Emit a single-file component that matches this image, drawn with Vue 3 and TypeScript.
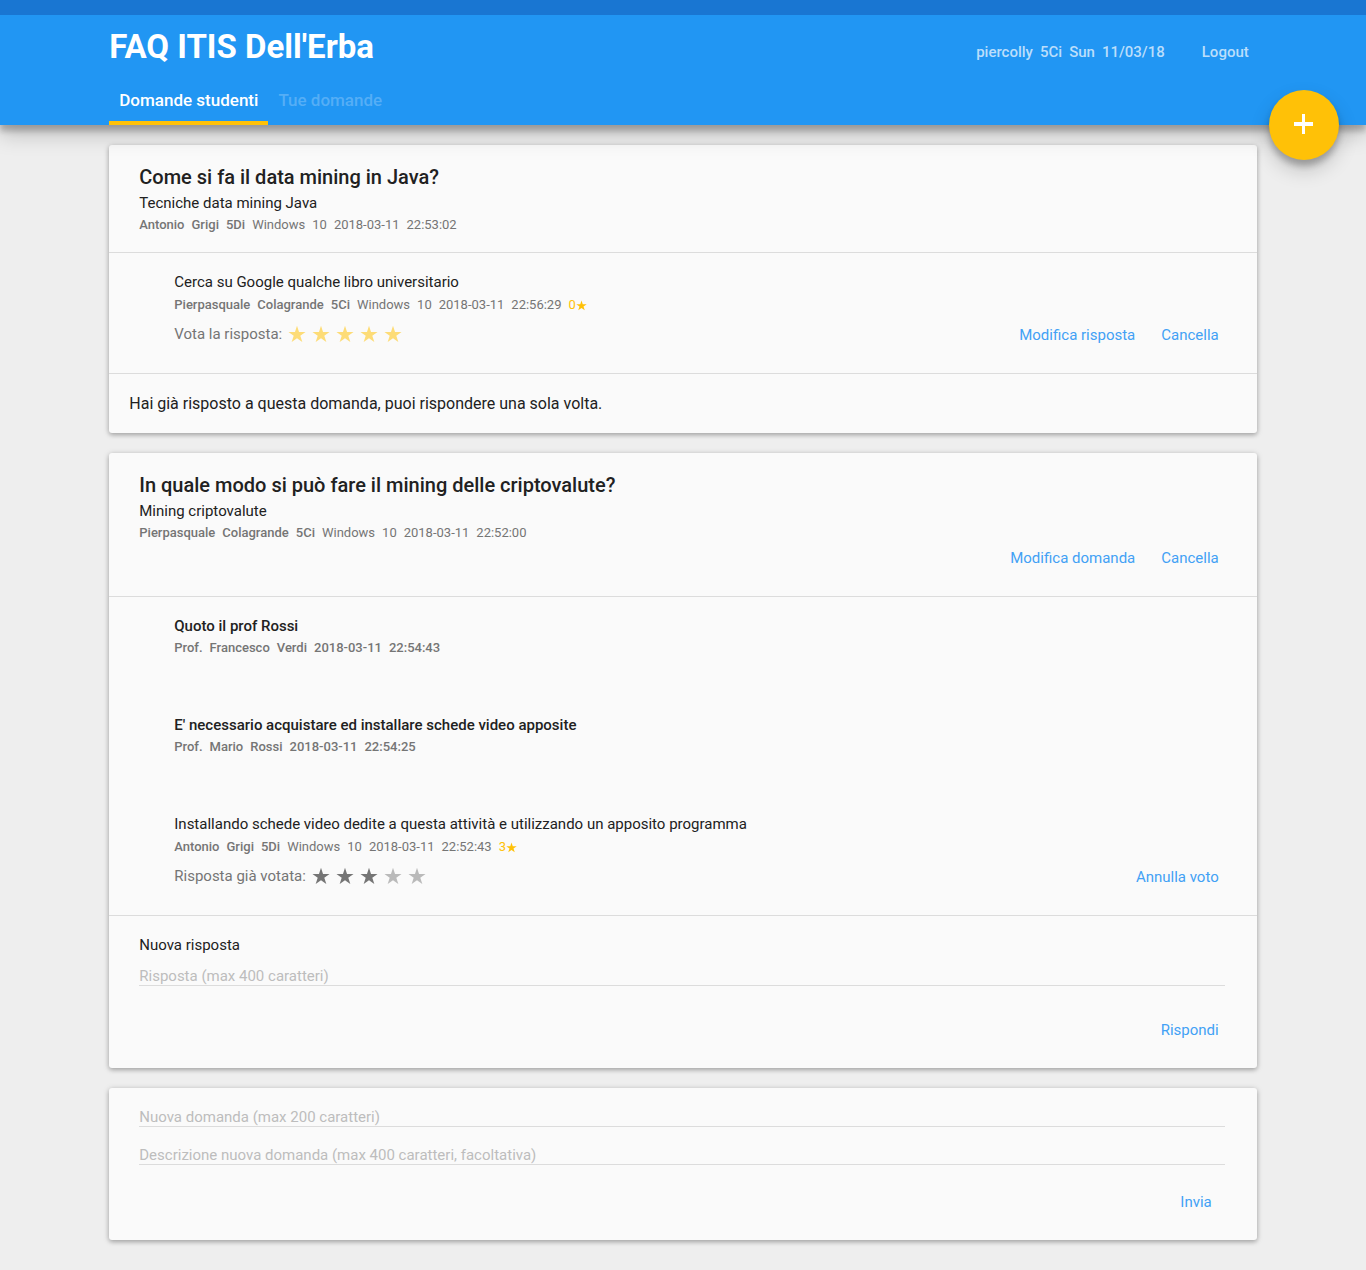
<script setup lang="ts">
import { ref } from 'vue'

interface Answer {
  id: number
  text: string
  author: string[]
  details: string[]
  professor?: boolean
  score?: number
  vote?: 'open' | 'done'
  actions: string[]
}

interface Question {
  id: number
  title: string
  description: string
  author: string[]
  details: string[]
  actions: string[]
  answers: Answer[]
  answered: boolean
}

const STAR = 'M12 1l2.7 8.2h8.7l-7 5.1 2.7 8.3-7.1-5.1-7.1 5.1 2.7-8.3-7-5.1h8.7z'

const session: string[] = ['piercolly', '5Ci', 'Sun', '11/03/18']

const questions: Question[] = [
  {
    id: 1,
    title: 'Come si fa il data mining in Java?',
    description: 'Tecniche data mining Java',
    author: ['Antonio', 'Grigi', '5Di'],
    details: ['Windows', '10', '2018-03-11', '22:53:02'],
    actions: [],
    answered: true,
    answers: [
      {
        id: 1,
        text: 'Cerca su Google qualche libro universitario',
        author: ['Pierpasquale', 'Colagrande', '5Ci'],
        details: ['Windows', '10', '2018-03-11', '22:56:29'],
        score: 0,
        vote: 'open',
        actions: ['Modifica risposta', 'Cancella'],
      },
    ],
  },
  {
    id: 2,
    title: 'In quale modo si può fare il mining delle criptovalute?',
    description: 'Mining criptovalute',
    author: ['Pierpasquale', 'Colagrande', '5Ci'],
    details: ['Windows', '10', '2018-03-11', '22:52:00'],
    actions: ['Modifica domanda', 'Cancella'],
    answered: false,
    answers: [
      {
        id: 2,
        text: 'Quoto il prof Rossi',
        author: ['Prof.', 'Francesco', 'Verdi', '2018-03-11', '22:54:43'],
        details: [],
        professor: true,
        actions: [],
      },
      {
        id: 3,
        text: "E' necessario acquistare ed installare schede video apposite",
        author: ['Prof.', 'Mario', 'Rossi', '2018-03-11', '22:54:25'],
        details: [],
        professor: true,
        actions: [],
      },
      {
        id: 4,
        text: 'Installando schede video dedite a questa attività e utilizzando un apposito programma',
        author: ['Antonio', 'Grigi', '5Di'],
        details: ['Windows', '10', '2018-03-11', '22:52:43'],
        score: 3,
        vote: 'done',
        actions: ['Annulla voto'],
      },
    ],
  },
]

const reply = ref('')
const newQuestion = ref('')
const newDescription = ref('')
</script>

<template>
  <div class="page">
    <header class="header">
      <div class="bar">
        <h1>FAQ ITIS Dell'Erba</h1>
        <div class="session">
          <span v-for="part in session" :key="part">{{ part }}</span>
          <a href="#logout" class="logout">Logout</a>
        </div>
      </div>
      <nav class="tabs">
        <a href="#domande" class="tab active">Domande studenti</a>
        <a href="#tue" class="tab">Tue domande</a>
      </nav>
      <button type="button" class="fab" aria-label="Nuova domanda">
        <svg width="20" height="22" viewBox="0 0 20 22" aria-hidden="true">
          <path d="M8 0h3v8h8v4h-8v8h-3v-8h-8v-4h8z" fill="#fff" />
        </svg>
      </button>
    </header>

    <main class="content">
      <article v-for="q in questions" :key="q.id" class="card">
        <section class="question">
          <h2>{{ q.title }}</h2>
          <p class="description">{{ q.description }}</p>
          <p class="meta">
            <b v-for="w in q.author" :key="w">{{ w }}</b>
            <span v-for="w in q.details" :key="w">{{ w }}</span>
          </p>
          <div v-if="q.actions.length" class="actions">
            <button v-for="a in q.actions" :key="a" type="button" class="flat">{{ a }}</button>
          </div>
        </section>

        <section class="answers">
          <div v-for="a in q.answers" :key="a.id" class="answer" :class="{ professor: a.professor }">
            <p class="text">{{ a.text }}</p>
            <p class="meta">
              <b v-for="w in a.author" :key="w">{{ w }}</b>
              <span v-for="w in a.details" :key="w">{{ w }}</span>
              <span v-if="a.score !== undefined" class="score">
                {{ a.score }}<svg width="11" height="11" viewBox="0 0 24 24" aria-hidden="true"><path :d="STAR" /></svg>
              </span>
            </p>
            <div v-if="a.vote" class="rating">
              <span class="prompt">{{ a.vote === 'open' ? 'Vota la risposta:' : 'Risposta già votata:' }}</span>
              <div v-if="a.vote === 'open'" class="stars open">
                <button v-for="n in 5" :key="n" type="button" class="star" :aria-label="`Vota ${n}`">
                  <svg width="18" height="18" viewBox="0 0 24 24" aria-hidden="true"><path :d="STAR" /></svg>
                </button>
              </div>
              <div v-else class="stars">
                <span v-for="n in 5" :key="n" class="star" :class="{ on: n <= (a.score ?? 0) }">
                  <svg width="18" height="18" viewBox="0 0 24 24" aria-hidden="true"><path :d="STAR" /></svg>
                </span>
              </div>
              <div class="actions">
                <button v-for="t in a.actions" :key="t" type="button" class="flat">{{ t }}</button>
              </div>
            </div>
          </div>
        </section>

        <p v-if="q.answered" class="notice">Hai già risposto a questa domanda, puoi rispondere una sola volta.</p>
        <form v-else class="reply" @submit.prevent>
          <label for="reply">Nuova risposta</label>
          <input id="reply" v-model="reply" type="text" maxlength="400" placeholder="Risposta (max 400 caratteri)" />
          <div class="actions">
            <button type="submit" class="flat">Rispondi</button>
          </div>
        </form>
      </article>

      <form class="card ask" @submit.prevent>
        <input v-model="newQuestion" type="text" maxlength="200" aria-label="Nuova domanda" placeholder="Nuova domanda (max 200 caratteri)" />
        <input v-model="newDescription" type="text" maxlength="400" aria-label="Descrizione nuova domanda" placeholder="Descrizione nuova domanda (max 400 caratteri, facoltativa)" />
        <div class="actions">
          <button type="submit" class="flat">Invia</button>
        </div>
      </form>
    </main>
  </div>
</template>

<style>
body {
  margin: 0;
  background: #eee;
}
</style>

<style scoped>
.page {
  font: 400 15px/20px Roboto, sans-serif;
  color: #212121;
}

h1,
h2,
p {
  margin: 0;
}

a {
  text-decoration: none;
  color: inherit;
}

button,
input {
  font: inherit;
  border: 0;
  padding: 0;
  background: none;
  border-radius: 0;
}

button {
  cursor: pointer;
}

svg {
  display: block;
  fill: currentColor;
}

.header {
  position: relative;
  padding: 0 8%;
  border-top: 15px solid #1976d2;
  background: #2196f3;
  box-shadow: 0 10px 20px rgba(0, 0, 0, 0.19), 0 6px 6px rgba(0, 0, 0, 0.23);
}

.bar {
  display: flex;
  align-items: center;
  justify-content: space-between;
  height: 64px;
}

h1 {
  font-size: 33px;
  line-height: 40px;
  font-weight: 700;
  color: #fff;
}

.session {
  display: flex;
  gap: 7px;
  padding: 10px 8px 0 0;
  font-weight: 500;
  color: #bbdefb;
}

.logout {
  margin-left: 30px;
}

.tabs {
  display: flex;
}

.tab {
  padding: 9px 10px;
  border-bottom: 4px solid transparent;
  font-size: 17px;
  line-height: 24px;
  font-weight: 500;
  color: #55aef6;
}

.tab.active {
  border-color: #ffc107;
  color: #fff;
}

.fab {
  position: absolute;
  right: 2%;
  bottom: -35px;
  display: flex;
  align-items: center;
  justify-content: center;
  width: 70px;
  height: 70px;
  border-radius: 50%;
  background: #ffc107;
  box-shadow: 0 10px 20px rgba(0, 0, 0, 0.19), 0 6px 6px rgba(0, 0, 0, 0.23);
}

.content {
  display: flex;
  flex-direction: column;
  gap: 20px;
  padding: 20px 8% 30px;
}

.card {
  border-radius: 3px;
  background: #fafafa;
  box-shadow: 0 2px 4px rgba(0, 0, 0, 0.2), 0 1px 6px rgba(0, 0, 0, 0.18);
}

.question {
  padding: 20px 25px 17px 30px;
}

h2 {
  font-size: 20px;
  line-height: 24px;
  font-weight: 500;
}

.description {
  line-height: 28px;
}

.meta {
  display: flex;
  gap: 7px;
  font-size: 13px;
  line-height: 16px;
  color: #757575;
}

.meta b {
  font-weight: 500;
}

.score {
  display: flex;
  align-items: center;
  color: #ffc107;
}

.actions {
  display: flex;
  justify-content: flex-end;
  margin-left: auto;
}

.question .meta {
  padding-bottom: 2px;
}

.question .actions {
  padding-bottom: 6px;
}

.flat {
  padding: 0 13px;
  line-height: 30px;
  color: #42a1f5;
}

.answers {
  border: solid #dcdcdc;
  border-width: 1px 0;
}

.answer {
  padding: 20px 25px 24px 65px;
}

.text {
  line-height: 18px;
}

.answer .meta {
  line-height: 28px;
}

.professor {
  padding-bottom: 35px;
}

.professor .text {
  font-weight: 500;
}

.professor .meta {
  line-height: 26px;
}

.rating {
  display: flex;
  align-items: center;
  height: 30px;
}

.rating .actions {
  padding-top: 2px;
}

.prompt {
  color: #757575;
}

.stars {
  display: flex;
  gap: 6px;
  padding-left: 6px;
  color: #bababa;
}

.stars.open {
  color: #fddc77;
}

.star {
  color: inherit;
}

.star.on {
  color: #757575;
}

.notice {
  padding: 18px 20px 17px;
  font-size: 16px;
  line-height: 24px;
}

.reply {
  display: flex;
  flex-direction: column;
  padding: 18px 32px 23px 30px;
}

.reply .actions {
  margin-right: -7px;
  padding-top: 29px;
}

label {
  line-height: 22px;
  margin-bottom: 8px;
}

input {
  display: block;
  box-sizing: border-box;
  width: 100%;
  height: 22px;
  padding-top: 2px;
  border-bottom: 1px solid #dcdcdc;
  color: #212121;
  outline: none;
}

input::placeholder {
  color: #bdbdbd;
  opacity: 1;
}

.ask {
  display: flex;
  flex-direction: column;
  gap: 16px;
  padding: 17px 32px 23px 30px;
}

.ask .actions {
  padding-top: 6px;
}
</style>
